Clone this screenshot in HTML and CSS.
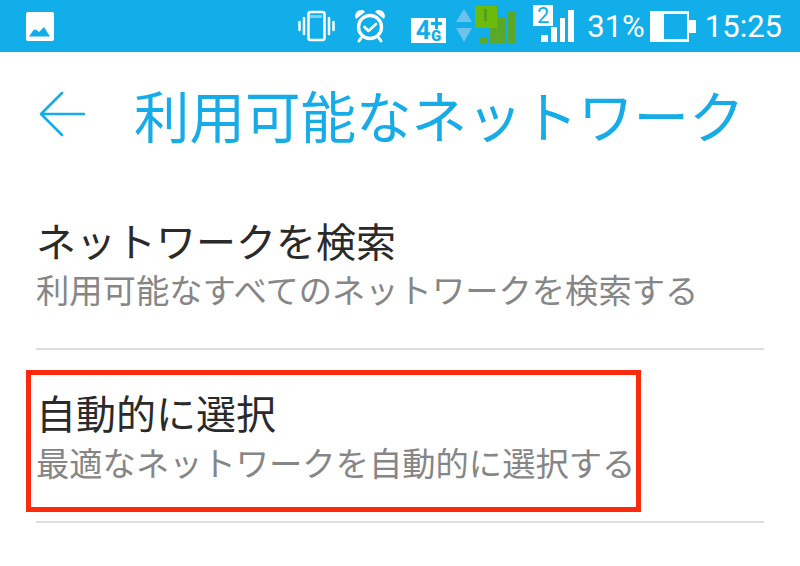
FILE: index.html
```html
<!DOCTYPE html>
<html lang="ja">

<head>
    <meta charset="UTF-8">
    <meta name="viewport" content="width=device-width, initial-scale=1.0">
    <title>利用可能なネットワーク</title>
    <link rel="stylesheet" href="styles.css">
</head>

<body>
    <!-- Status bar -->
    <header class="status-bar">
        <svg class="icon-picture" width="28" height="29" viewBox="0 0 28 29">
            <path fill="#fff" fill-rule="evenodd" d="M2 0H26Q28 0 28 2V27Q28 29 26 29H2Q0 29 0 27V2Q0 0 2 0ZM3 24.500H24L18 15 13 20 10 17.500 7.500 18Z" />
        </svg>
        <div class="status-icons">
            <svg class="icon-vibrate" width="37" height="32" viewBox="0 0 37 32">
                <rect x="10.500" y="2" width="16" height="28" rx="2" fill="none" stroke="#fff" stroke-width="2.500" />
                <path fill="#fff" d="M12 5H24V8H12Z" opacity=".45" />
                <path stroke="#fff" stroke-width="2.500" stroke-linecap="round" d="M1.500 12V20M6 8V24M31 8V24M35.500 12V20" />
            </svg>
            <svg class="icon-alarm" width="34" height="34" viewBox="0 0 34 34">
                <circle cx="17" cy="18" r="11.500" fill="none" stroke="#fff" stroke-width="3.400" />
                <path fill="none" stroke="#fff" stroke-width="2.600" stroke-linecap="round" stroke-linejoin="round" d="M11.500 18L15.500 22 23 15" />
                <path fill="#fff" d="M2 7Q3 0 10 1L12 3 3 10ZM32 7Q31 0 24 1L22 3 31 10Z" />
                <path stroke="#fff" stroke-width="3" stroke-linecap="round" d="M8 29L6 32M26 29L28 32" />
            </svg>
            <span class="net-badge">
                <span class="net-num">4</span>
                <span class="net-sup">
                    <svg width="11" height="11" viewBox="0 0 11 11"><path fill="#12aeea" d="M4 0H7V4H11V7H7V11H4V7H0V4H4Z" /></svg>
                    <b>G</b>
                </span>
            </span>
            <svg class="icon-updown" width="16" height="36" viewBox="0 0 16 36">
                <path fill="#6cc4ee" d="M8 1L16 14H0ZM0 20H16L8 34Z" />
            </svg>
            <svg class="icon-signal-green" width="41" height="37" viewBox="0 0 41 37">
                <path fill="#59a82a" d="M5 31H12V37H5ZM15 22H22V37H15ZM23 12H30V37H23ZM33 5H40V37H33Z" />
                <rect x="0" y="0" width="22" height="22" fill="#6cba0a" />
                <path fill="#4fa11f" d="M9 3H12V15H9Z" />
            </svg>
            <span class="signal-two">
                <span class="sim-badge">2</span>
                <svg width="33" height="32" viewBox="0 0 33 32">
                    <path fill="#fff" d="M0 25H7V32H0ZM10 17H16V32H10ZM19 8H24V32H19ZM27 0H33V32H27Z" />
                </svg>
            </span>
            <span class="battery-pct">31%</span>
            <svg class="icon-battery" width="46" height="31" viewBox="0 0 46 31">
                <path fill="#fff" fill-rule="evenodd" d="M0 0H39V9H46V22H39V31H0ZM14 3V28H37V3Z" />
            </svg>
            <span class="clock">15:25</span>
        </div>
    </header>

    <div class="app-bar">
        <svg class="back-arrow" width="46" height="46" viewBox="0 0 46 46">
            <path fill="none" stroke="#17ace8" stroke-width="2.600" stroke-linecap="round" stroke-linejoin="round" d="M45 23H2M23 2L2 23 23 44" />
        </svg>
        <h1>利用可能なネットワーク</h1>
    </div>

    <main>
        <div class="setting">
            <h2>ネットワークを検索</h2>
            <p>利用可能なすべてのネットワークを検索する</p>
        </div>
        <div class="setting setting-marked">
            <h2>自動的に選択</h2>
            <p>最適なネットワークを自動的に選択する</p>
            <div class="red-box"></div>
        </div>
    </main>
</body>

</html>
```

FILE: styles.css
```css
* {
    margin: 0;
    padding: 0;
    box-sizing: border-box;
}

body {
    width: 800px;
    height: 566px;
    overflow: hidden;
    background: #fff;
    font-family: "Noto Sans CJK JP", "Noto Sans", sans-serif;
}

/* Status bar */
.status-bar {
    height: 52px;
    background: #12aeea;
    display: flex;
    align-items: center;
    justify-content: space-between;
    padding: 0 18px 0 26px;
}

.status-icons {
    display: flex;
    align-items: center;
    color: #fff;
    font-family: Roboto, sans-serif;
}

.icon-alarm {
    margin-left: 18px;
}

.net-badge {
    margin: 8px 0 0 24px;
    width: 35px;
    height: 25px;
    background: #fff;
    color: #12aeea;
    display: flex;
    align-items: center;
    justify-content: center;
    font-weight: 700;
}

.net-num {
    font-size: 26px;
    line-height: 25px;
}

.net-sup {
    display: flex;
    flex-direction: column;
    align-items: center;
    font-size: 15px;
    line-height: 14px;
}

.icon-updown {
    margin-left: 10px;
}

.icon-signal-green {
    margin: 0 0 4px 3px;
}

.signal-two {
    margin: 0 0 5px 17px;
    display: flex;
    position: relative;
    width: 41px;
    height: 37px;
    align-items: flex-end;
    justify-content: flex-end;
}

.sim-badge {
    position: absolute;
    left: 0;
    top: 0;
    width: 20px;
    height: 21px;
    background: #fff;
    color: #12aeea;
    font-size: 22px;
    line-height: 21px;
    text-align: center;
}

.battery-pct {
    margin-left: 13px;
    font-size: 31px;
}

.icon-battery {
    margin-left: 5px;
}

.clock {
    margin-left: 9px;
    font-size: 31px;
}

/* Title row */
.app-bar {
    display: flex;
    align-items: center;
    height: 123px;
    padding-left: 39px;
}

.app-bar h1 {
    margin-left: 49px;
    font-size: 55.5px;
    font-weight: 400;
    color: #17ace8;
    white-space: nowrap;
}

/* Settings list */
main {
    padding: 0 36px;
}

.setting {
    position: relative;
    height: 175px;
    padding-top: 40px;
    border-bottom: 2px solid #dedede;
}

.setting h2 {
    font-size: 40px;
    line-height: 50px;
    font-weight: 400;
    color: #2a2a2a;
    margin-bottom: 2px;
    white-space: nowrap;
}

.setting p {
    font-size: 33.3px;
    line-height: 44px;
    color: #868686;
    white-space: nowrap;
}

.setting-marked {
    height: 173px;
    padding-top: 37px;
}

.setting-marked h2 {
    margin-bottom: 3px;
}

.red-box {
    position: absolute;
    left: -10px;
    top: 20px;
    width: 615px;
    height: 142px;
    border: 5px solid #fb2a0c;
}
```
